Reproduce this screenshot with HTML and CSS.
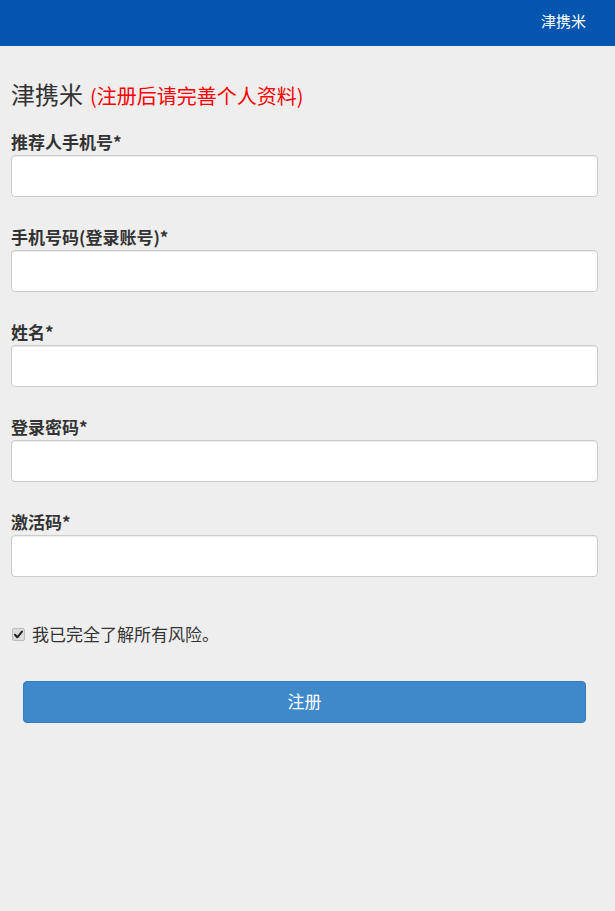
FILE: index.html
```html
<!DOCTYPE html>
<html lang="zh-CN">
<head>
<meta charset="utf-8">
<title>注册</title>
<link rel="stylesheet" href="styles.css">
</head>
<body>
<header class="topbar">
  <span class="brand">津携米</span>
</header>
<main class="page">
  <h3 class="title">津携米<small class="hint">(注册后请完善个人资料)</small></h3>
  <form class="form">
    <div class="group">
      <label class="label">推荐人手机号*</label>
      <input class="input" type="text">
    </div>
    <div class="group">
      <label class="label">手机号码(登录账号)*</label>
      <input class="input" type="text">
    </div>
    <div class="group">
      <label class="label">姓名*</label>
      <input class="input" type="text">
    </div>
    <div class="group">
      <label class="label">登录密码*</label>
      <input class="input" type="password">
    </div>
    <div class="group">
      <label class="label">激活码*</label>
      <input class="input" type="text">
    </div>
    <div class="agree">
      <span class="check"><svg width="11" height="11" viewBox="0 0 11 11"><path d="M2 5.8 L4.3 8.3 L9 2.6" fill="none" stroke="#222" stroke-width="2" stroke-linecap="round" stroke-linejoin="round"/></svg></span>
      <span class="agree-text">我已完全了解所有风险。</span>
    </div>
    <div class="actions">
      <button class="btn" type="button">注册</button>
    </div>
  </form>
</main>
</body>
</html>
```
FILE: styles.css
```css
* { box-sizing: border-box; }
html, body {
  margin: 0;
  padding: 0;
  background: #eeeeee;
  font-family: "Noto Sans CJK SC", "Noto Sans", "Liberation Sans", sans-serif;
  color: #333;
}
.topbar {
  height: 46px;
  background: #0355ae;
  display: flex;
  align-items: center;
  justify-content: flex-end;
  padding-right: 29px;
}
.brand {
  color: #fff;
  font-size: 15px;
  line-height: 20px;
  margin-top: -4px;
}
.page {
  padding: 33px 17px 0 11px;
}
.title {
  margin: 0 0 21px;
  font-size: 24px;
  line-height: 30px;
  font-weight: 400;
  color: #333;
}
.hint {
  font-size: 20px;
  color: #ff0000;
  margin-left: 7px;
}
.form { margin: 0; }
.group {
  margin-bottom: 30px;
}
.label {
  display: block;
  font-size: 17px;
  line-height: 20px;
  font-weight: 700;
  margin-bottom: 3px;
  color: #333;
}
.input {
  display: block;
  width: 100%;
  height: 42px;
  border: 1px solid #cccccc;
  border-radius: 4px;
  background: #fff;
  box-shadow: inset 0 1px 1px rgba(0,0,0,0.075);
  padding: 6px 12px;
  font-size: 16px;
  outline: none;
}
.agree {
  margin-top: 47px;
  display: flex;
  align-items: center;
  height: 20px;
}
.check {
  width: 13px;
  height: 13px;
  margin: 0 7px 0 1px;
  border: 1px solid #bbb;
  border-radius: 2px;
  background: #dcdcdc;
  display: flex;
  align-items: center;
  justify-content: center;
}
.agree-text {
  font-size: 17px;
  line-height: 20px;
}
.actions {
  margin-top: 37px;
  padding: 0 12px;
}
.btn {
  display: block;
  width: 100%;
  height: 42px;
  background: #3f89ca;
  border: 1px solid #357ebd;
  border-radius: 4px;
  color: #fff;
  font-family: inherit;
  font-size: 17px;
  line-height: 20px;
  padding: 0 0 3px;
}
```
